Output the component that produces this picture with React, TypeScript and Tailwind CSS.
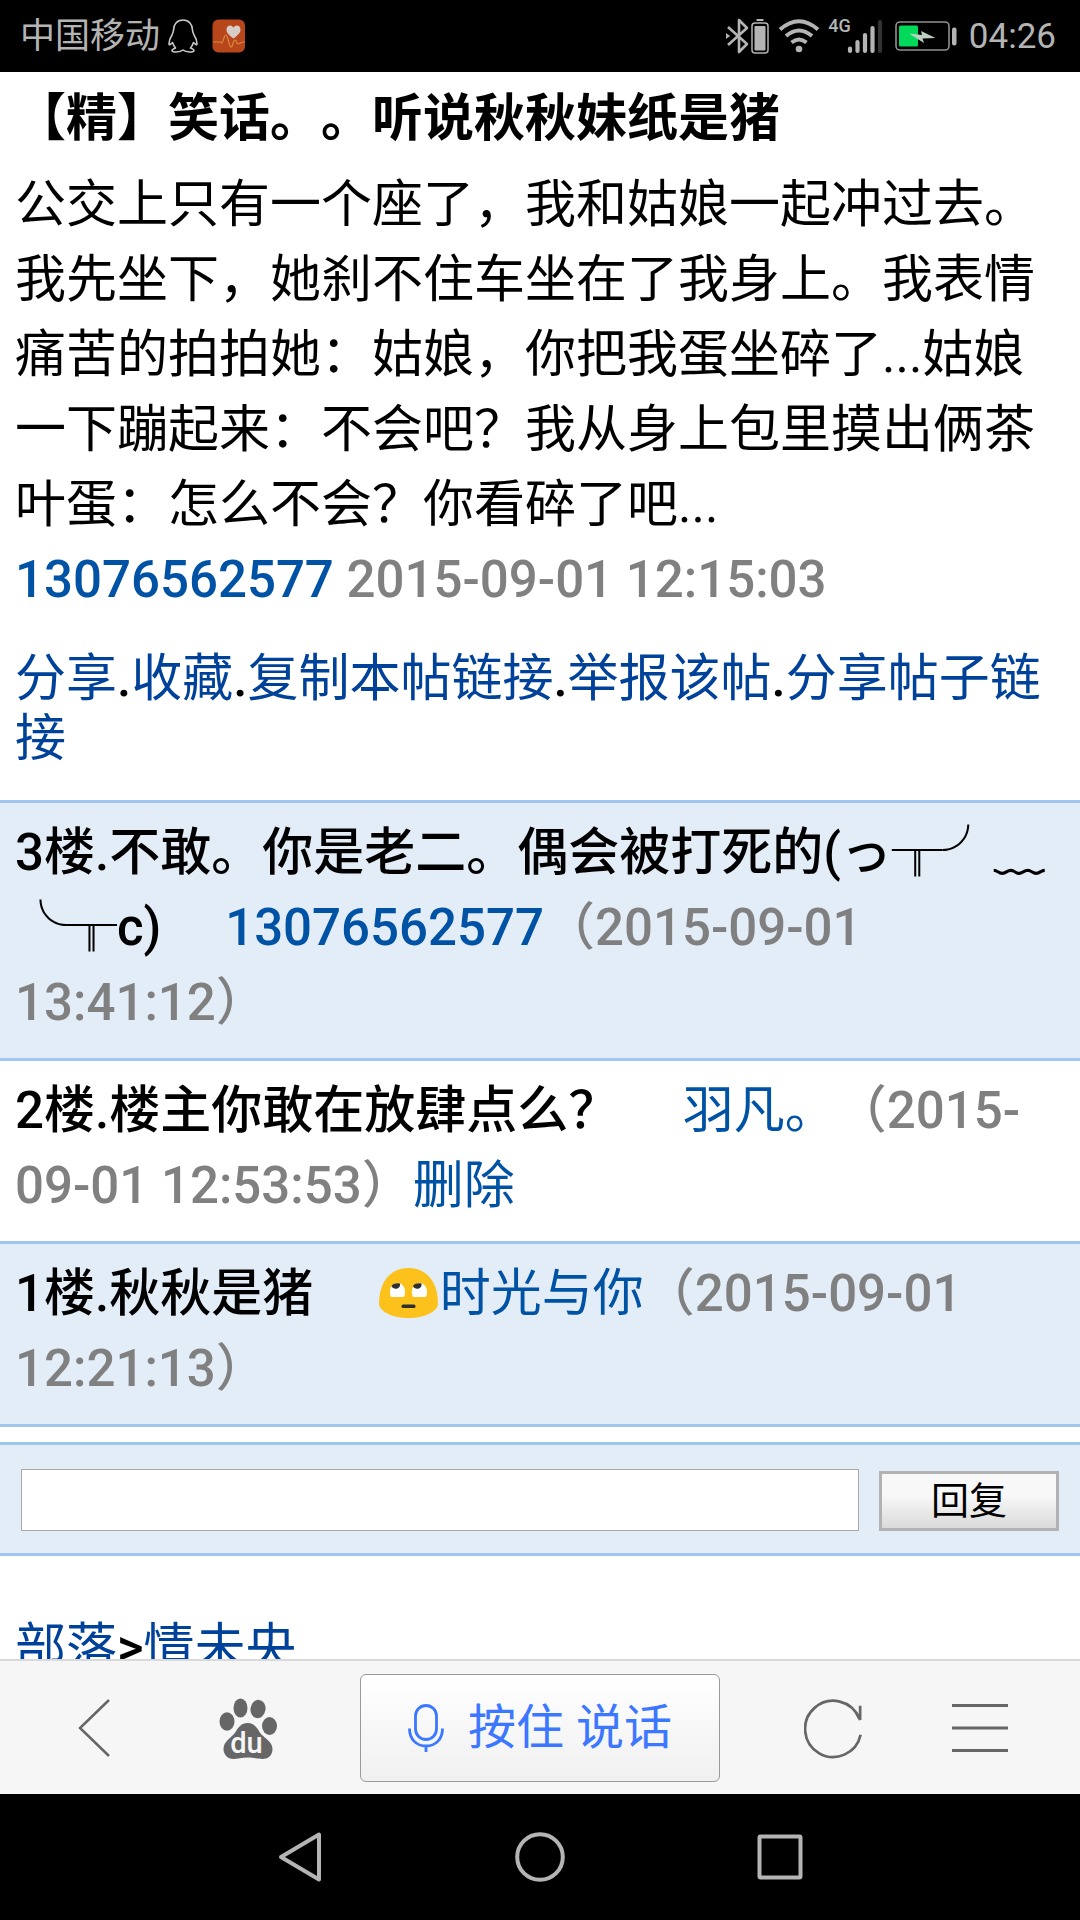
import type { ReactNode } from "react";

const LINKS = ["分享", "收藏", "复制本帖链接", "举报该帖", "分享帖子链接"];

type Comment = {
  floor: number;
  text: string;
  author: string;
  time: string;
  emoji?: boolean;
  removable?: boolean;
};

const COMMENTS: Comment[] = [
  { floor: 3, text: "不敢。你是老二。偶会被打死的(っ╥╯﹏╰╥c)", author: "13076562577", time: "2015-09-01 13:41:12" },
  { floor: 2, text: "楼主你敢在放肆点么？", author: "羽凡。", time: "2015-09-01 12:53:53", removable: true },
  { floor: 1, text: "秋秋是猪", author: "时光与你", time: "2015-09-01 12:21:13", emoji: true },
];

function StatusBar() {
  return (
    <div className="flex h-[72px] shrink-0 items-center justify-between bg-black pl-5 pr-6 text-[#b4b4b4]">
      <div className="flex items-center">
        <span className="text-[35px] leading-none">中国移动</span>
        <svg className="ml-2" width="30" height="34" viewBox="0 0 30 34" fill="none" stroke="#c8c8c8" strokeWidth="1.6" strokeLinejoin="round">
          <path d="M15 1C9 1 5.500 5.500 5.500 11c0 2-.5 3-1.500 5C2 19 1 21.500 1 25c.3 1.500 1.500.5 3.500-1.500.7 2 1.700 4 3 5.500-2 .8-3.500 1.500-3.500 2.800C4 33.500 12 33.500 15 31c3 2.500 11 2.500 11 .8 0-1.300-1.500-2-3.500-2.800 1.300-1.500 2.300-3.500 3-5.500 2 2 3.200 3 3.500 1.500 0-3.500-1-6-3-9-1-2-1.500-3-1.500-5C24.500 5.500 21 1 15 1Z" />
        </svg>
        <svg className="ml-3.5" width="34" height="34" viewBox="0 0 34 34">
          <rect x="0.500" y="0.500" width="32.500" height="33" rx="6" fill="#b7461a" />
          <path d="M1 23h7l2 1c2-3 2-8 4-8s3 12 5 12 2-7 4-7 1 4 3 4 2-2 7-2" fill="none" stroke="#d98a3d" strokeWidth="1.200" />
          <path d="M21.500 19.500c-5-4-7-6-7-8.800 0-4.500 5-5.500 7-2 2-3.500 7-2.500 7 2 0 2.800-2 4.800-7 8.800Z" fill="#d6cdc6" />
        </svg>
      </div>
      <div className="flex items-center">
        <svg width="44" height="36" viewBox="0 0 44 36" fill="none" stroke="#b4b4b4" strokeWidth="2.600">
          <path d="M2 9l19 17-8 8V2l8 8L2 27" strokeLinejoin="round" />
          <path d="M0 15l4 3-4 3z" fill="#b4b4b4" stroke="none" />
          <rect x="26" y="5" width="16" height="30" rx="3" strokeWidth="1.500" />
          <rect x="28.500" y="8" width="11" height="24.500" rx="1" fill="#b4b4b4" stroke="none" />
          <path d="M30.500 2h7" strokeWidth="2" />
        </svg>
        <svg className="ml-2" width="42" height="36" viewBox="0 0 42 36" fill="none" stroke="#b4b4b4" strokeWidth="4">
          <path d="M2 11.500Q21-5 40 11.500M8 18Q21 7 34 18M13.500 24.500Q21 18.500 28.500 24.500" />
          <circle cx="21" cy="31" r="3.300" fill="#b4b4b4" stroke="none" />
        </svg>
        <div className="ml-2 flex">
          <span className="text-[18px] font-medium leading-4">4G</span>
          <svg className="-ml-1" width="36" height="36" viewBox="0 0 36 36" stroke="#b4b4b4" strokeWidth="4.200" strokeLinecap="round">
            <path d="M3 30.500V33M10.500 24V33M18 17V33M25.500 10V33" />
            <path d="M33 4V33" stroke="#333" />
          </svg>
        </div>
        <svg className="ml-3" width="62" height="32" viewBox="0 0 62 32">
          <rect x="1" y="2" width="53" height="28" rx="4" fill="none" stroke="#909090" strokeWidth="1.600" />
          <rect x="4" y="5.500" width="19" height="21" rx="1.500" fill="#00d95a" />
          <path d="M14 13.500l13 1.500-1-4 14.500 7-13 .5 1.500 4.500z" fill="#bcd0c2" />
          <rect x="57" y="7.500" width="4.500" height="18" rx="2" fill="#b4b4b4" />
        </svg>
        <span className="ml-3 text-[35px] leading-none">04:26</span>
      </div>
    </div>
  );
}

function RollingEyes() {
  return (
    <svg className="mx-px inline-block align-[-8px]" width="61" height="52" viewBox="0 0 61 52" role="img" aria-label="白眼">
      <path d="M1 37C1 14 13 1 30.500 1S60 14 60 37c0 6-11 14-29.500 14S1 43 1 37Z" fill="#fcc21b" />
      <path d="M12 25c0-12 15-12 15 0 0 3-.8 4.500-1.500 5h-12c-.8-.5-1.500-2-1.500-5ZM34 25c0-12 15-12 15 0 0 3-.8 4.500-1.500 5h-12c-.8-.5-1.500-2-1.500-5Z" fill="#fff" />
      <path d="M13.500 19c1-2 4-3.500 8.500-2.500 1 6-7 7-8.500 2.500ZM35 19c1-2 4-3.500 8.500-2.500 1 6-7 7-8.500 2.500Z" fill="#2f2f2f" />
      <rect x="23.500" y="37.500" width="14" height="3.500" rx="1.500" fill="#2f2f2f" />
    </svg>
  );
}

function Floor({ floor, text, author, time, emoji, removable }: Comment) {
  // phone-number accounts are set heavier than nicknames
  const weight = /^\d+$/.test(author) ? "font-medium" : "font-normal";

  return (
    <li className="border-t-[3px] border-[#a0c6ee] px-[15px] pb-[18px] pt-3 leading-[75px] odd:bg-[#e3edf8]">
      {`${floor}楼.${text}　 `}
      <a href="#author" className={`text-[#0052a5] ${weight}`}>
        {emoji && <RollingEyes />}
        {author}
      </a>
      <span className="text-[#808080]">{`（${time}）`}</span>
      {removable && (
        <a href="#delete" className="font-normal text-[#0052a5]">
          删除
        </a>
      )}
    </li>
  );
}

function IconButton({ label, children }: { label: string; children: ReactNode }) {
  return (
    <button type="button" aria-label={label} className="flex size-[60px] items-center justify-center">
      {children}
    </button>
  );
}

function BrowserBar() {
  return (
    <div className="grid h-[135px] shrink-0 grid-cols-3 items-center border-t-2 border-[#d9d9d9] bg-[#f6f6f6] text-[#666]">
      <div className="flex items-center justify-between pl-16 pr-[82px]">
        <IconButton label="后退">
          <svg width="60" height="60" viewBox="0 0 60 60" fill="none" stroke="currentColor" strokeWidth="2.500">
            <path d="M45 2L16 30l29 28" />
          </svg>
        </IconButton>
        <IconButton label="百度">
          <svg width="60" height="62" viewBox="0 0 60 62" fill="currentColor">
            <ellipse cx="9" cy="24.500" rx="7.500" ry="9.200" />
            <ellipse cx="22.500" cy="11" rx="7" ry="9.500" />
            <ellipse cx="40" cy="12" rx="7.500" ry="9.200" transform="rotate(8 40 12)" />
            <ellipse cx="51.500" cy="29" rx="7.500" ry="9" />
            <path d="M29.500 26c6 0 9 4 12 9 4 6 13 9 13 17 0 7-5 10-10 10-5 0-9-1.500-15-1.500S20 62 15 62C10 62 5.500 58 5.500 52c0-8 8-11 12-17 3-5 6-9 12-9Z" />
            <text x="28.500" y="56" textAnchor="middle" fill="#f6f6f6" className="text-[29px] font-medium">
              du
            </text>
          </svg>
        </IconButton>
      </div>
      <button
        type="button"
        className="flex h-[108px] items-center justify-center rounded-md border border-[#999] bg-linear-to-b from-white to-[#f0f0f0] text-[48px] leading-none text-[#3c78ff]"
      >
        <svg className="mr-6" width="36" height="48" viewBox="0 0 36 48" fill="none" stroke="currentColor" strokeWidth="2.800">
          <rect x="7.500" y="1.500" width="21" height="34" rx="10.500" />
          <path d="M1.500 24.500c0 11 7 17.500 16.500 17.500s16.500-6.500 16.500-17.500M18 42v6" />
        </svg>
        按住 说话
      </button>
      <div className="flex items-center justify-between pl-[84px] pr-[70px]">
        <IconButton label="刷新">
          <svg width="62" height="62" viewBox="0 0 62 62" fill="none" stroke="currentColor" strokeWidth="2.800">
            <path d="M58.500 38A29 29 0 1 1 57 21" />
            <path d="M58 8v14.500L54 15" />
          </svg>
        </IconButton>
        <IconButton label="菜单">
          <svg width="58" height="48" viewBox="0 0 58 48" stroke="currentColor" strokeWidth="2.800">
            <path d="M1 1.500h56M1 24h56M1 46.500h56" />
          </svg>
        </IconButton>
      </div>
    </div>
  );
}

function SystemNav() {
  return (
    <nav className="flex h-[126px] shrink-0 items-center justify-center gap-[180px] bg-black">
      <IconButton label="返回">
        <svg width="60" height="60" viewBox="0 0 60 60" fill="none" stroke="#b4b4b4" strokeWidth="4" strokeLinejoin="round">
          <path d="M49 7.500v45L11 30z" />
        </svg>
      </IconButton>
      <IconButton label="主屏幕">
        <svg width="60" height="60" viewBox="0 0 60 60" fill="none" stroke="#b4b4b4" strokeWidth="4">
          <circle cx="30" cy="30" r="22.800" />
        </svg>
      </IconButton>
      <IconButton label="最近任务">
        <svg width="60" height="60" viewBox="0 0 60 60" fill="none" stroke="#b4b4b4" strokeWidth="4" strokeLinejoin="round">
          <rect x="9.500" y="9.500" width="41" height="41" rx="1" />
        </svg>
      </IconButton>
    </nav>
  );
}

export default function App() {
  return (
    <div className="flex h-screen flex-col bg-white font-['Roboto','Noto_Sans_CJK_SC',sans-serif] text-black [text-spacing-trim:space-all]">
      <StatusBar />
      <main className="min-h-0 flex-1 overflow-hidden text-[51px] font-medium">
        <article className="px-[15px] pb-[31px] pt-[17px]">
          <h1 className="font-bold leading-[60px]">【精】笑话。。听说秋秋妹纸是猪</h1>
          <div className="mt-[18px] leading-[75px]">
            <p className="font-normal">
              公交上只有一个座了，我和姑娘一起冲过去。我先坐下，她刹不住车坐在了我身上。我表情痛苦的拍拍她：姑娘，你把我蛋坐碎了...姑娘一下蹦起来：不会吧？我从身上包里摸出俩茶叶蛋：怎么不会？你看碎了吧...
            </p>
            <a href="#author" className="text-[#0052a5]">
              13076562577
            </a>{" "}
            <span className="text-[#808080]">2015-09-01 12:15:03</span>
          </div>
          <div className="mt-8 leading-[60px]">
            {LINKS.map((name, i) => (
              <span key={name}>
                {i > 0 && "."}
                <a href="#action" className="font-normal text-[#00429a]">
                  {name}
                </a>
              </span>
            ))}
          </div>
        </article>
        <ul className="border-b-[3px] border-[#a0c6ee]">
          {COMMENTS.map((c) => (
            <Floor key={c.floor} {...c} />
          ))}
        </ul>
        <form
          onSubmit={(e) => e.preventDefault()}
          className="mt-[15px] flex items-end gap-5 border-y-[3px] border-[#a0c6ee] bg-[#e3edf8] px-[21px] pb-[22px] pt-6"
        >
          <input
            type="text"
            aria-label="回复内容"
            className="h-[62px] min-w-0 flex-1 border border-[#a9a9a9] bg-white px-2 text-[38px] outline-none"
          />
          <button
            type="submit"
            className="h-[60px] w-[180px] border-[3px] border-[#b2b2b2] bg-linear-to-b from-[#f8f8f8] from-40% to-[#dadada] text-[38px] font-normal leading-none"
          >
            回复
          </button>
        </form>
        <p className="px-[15px] pt-[62px] leading-[60px]">
          <a href="#tribe" className="font-normal text-[#00429a]">
            部落
          </a>
          &gt;
          <a href="#board" className="font-normal text-[#00429a]">
            情未央
          </a>
        </p>
      </main>
      <BrowserBar />
      <SystemNav />
    </div>
  );
}
